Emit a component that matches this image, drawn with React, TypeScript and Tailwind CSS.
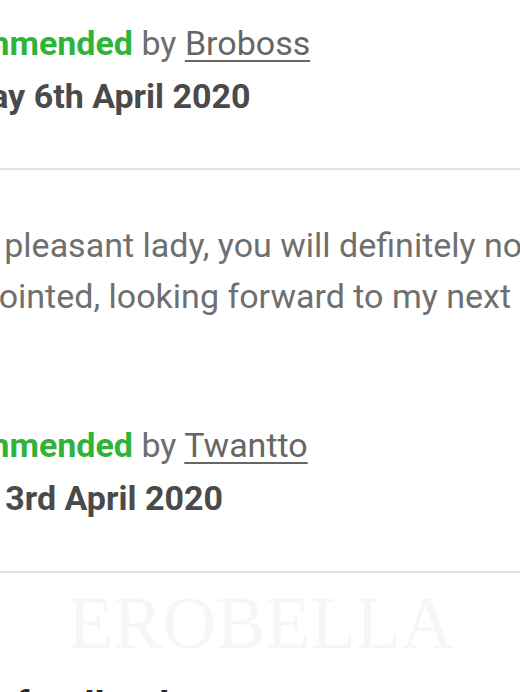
import React from 'react';

interface Review {
  author: string;
  date: string;
}

const reviews: Review[] = [
  { author: 'Broboss', date: 'Monday 6th April 2020' },
  { author: 'Twantto', date: 'Friday 3rd April 2020' },
];

const ReviewHeader: React.FC<{ review: Review }> = ({ review }) => (
  <div className="leading-[53px] whitespace-nowrap">
    <div>
      <span className="font-bold text-[#2fb33a]">Recommended</span>{' '}
      <span className="text-[#6e6e6e]">by</span>{' '}
      <span className="text-[#666666] underline decoration-2 underline-offset-[5px]">{review.author}</span>
    </div>
    <div className="font-bold text-[#4a4a4a]">{review.date}</div>
  </div>
);

const App: React.FC = () => {
  return (
    <div className="relative w-[520px] h-[692px] overflow-hidden bg-white font-['Roboto',sans-serif] text-[34px]">
      {/* Watermark */}
      <div className="absolute left-[68px] top-[568px] font-['Liberation_Serif',serif] text-[74px] text-[#f6f6f6] select-none pointer-events-none">
        EROBELLA
      </div>

      <div className="relative ml-[-97px] w-[900px]">
        <div className="pt-[17px]">
          <ReviewHeader review={reviews[0]} />
        </div>

        <div className="mt-[45px] h-[2px] bg-[#e2e2e2]" />

        <div className="mt-[50px] leading-[51px] text-[#6f6f6f] whitespace-nowrap">
          <p>A very pleasant lady, you will definitely not be</p>
          <p className="ml-[-6px]">disappointed, looking forward to my next &nbsp;visit.</p>
        </div>

        <div className="mt-[97px]">
          <ReviewHeader review={reviews[1]} />
        </div>

        <div className="mt-[46px] h-[2px] bg-[#e2e2e2]" />

        <h2 className="mt-[110px] pl-[112px] text-[40px] leading-[48px] font-bold text-[#2b2b2b]">feedback</h2>
      </div>
    </div>
  );
};

export default App;
